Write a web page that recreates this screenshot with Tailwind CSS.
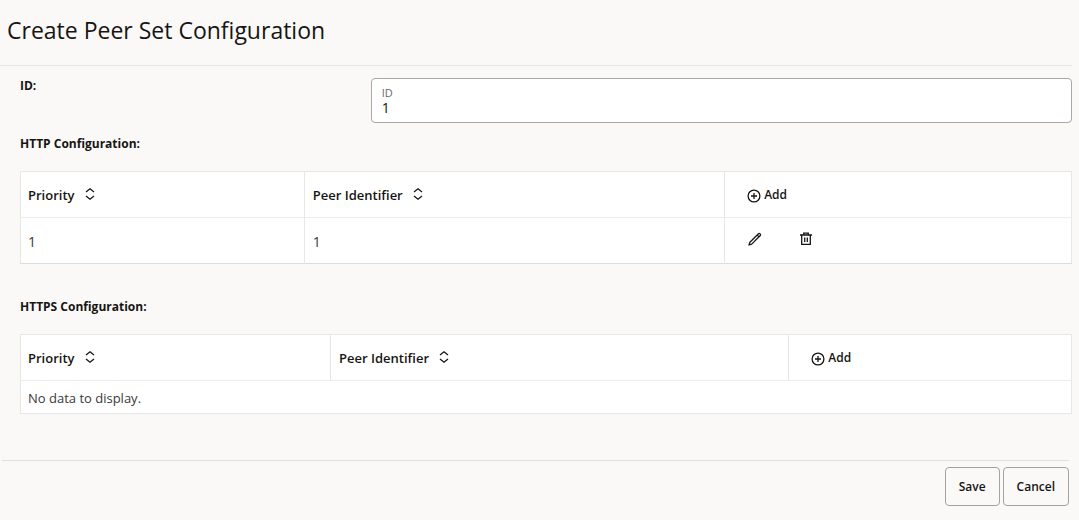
<!DOCTYPE html>
<html lang="en">
<head>
<meta charset="utf-8">
<meta name="viewport" content="width=device-width, initial-scale=1">
<title>Create Peer Set Configuration</title>
<script src="https://cdn.jsdelivr.net/npm/@tailwindcss/browser@4"></script>
</head>
<body class="min-h-screen bg-[#faf9f8] font-['Open_Sans','Noto_Sans',sans-serif] text-[#161513]">
<svg class="hidden" aria-hidden="true">
  <symbol id="sort" viewBox="0 0 10 12"><path d="M1 4 5 .8 9 4M1 8l4 3.200L9 8" fill="none" stroke="currentColor" stroke-width="1.300"/></symbol>
  <symbol id="plus" viewBox="0 0 14 14"><circle cx="7" cy="7" r="5.900" fill="none" stroke="currentColor" stroke-width="1.300"/><path d="M7 4v6M4 7h6" fill="none" stroke="currentColor" stroke-width="1.300"/></symbol>
  <symbol id="pencil" viewBox="0 0 14 14"><path d="M1 13 1.900 10.300 10.500 1.700a1 1 0 0 1 1.400 0l.4.4a1 1 0 0 1 0 1.400L3.700 12.100ZM9.200 3l1.800 1.800" fill="none" stroke="currentColor" stroke-width="1.300" stroke-linejoin="round"/></symbol>
  <symbol id="trash" viewBox="0 0 12 14"><path d="M0 3h12M3.700 3V1.200h4.600V3M1.700 3v9.300h8.600V3M4.700 5.500v4.500M7.300 5.500v4.500" fill="none" stroke="currentColor" stroke-width="1.300"/></symbol>
</svg>
<header class="mr-[7px] border-b border-[#e6e5e4] pt-3 pb-4 pl-[7px]">
  <h1 class="text-[23px] leading-[37px]">Create Peer Set Configuration</h1>
</header>
<main class="pr-[7px] pl-5">
  <div class="flex items-start pt-3">
    <label for="peer-id" class="w-1/3 shrink-0 text-xs leading-4 font-bold">ID:</label>
    <div class="flex h-[45px] grow flex-col rounded border border-[#a9a8a6] bg-white px-[10px] pt-[7px]">
      <label for="peer-id" class="text-[11px] leading-[14px] text-[#6b6967]">ID</label>
      <input id="peer-id" type="text" value="1" class="h-4 w-full bg-transparent text-sm leading-4 outline-none">
    </div>
  </div>

  <h2 class="mt-[13px] text-xs leading-4 font-bold">HTTP Configuration:</h2>
  <table class="mt-[19px] w-full table-fixed border-collapse border border-b-[#dddcda] border-[#e8e7e6] bg-white text-left text-sm" aria-label="HTTP Configuration">
    <colgroup><col class="w-[27%]"><col class="w-[40%]"><col></colgroup>
    <thead>
      <tr class="h-[46px] border-b border-[#ececeb]">
        <th class="border-r border-[#e8e7e6] px-[7px] pt-[2px] text-[13px] font-semibold"><button type="button" class="flex items-center gap-[10px]">Priority <svg class="mb-1 h-3 w-[10px]"><use href="#sort"/></svg></button></th>
        <th class="border-r border-[#e8e7e6] px-2 pt-[2px] text-[13px] font-semibold"><button type="button" class="flex items-center gap-[10px]">Peer Identifier <svg class="mb-1 h-3 w-[10px]"><use href="#sort"/></svg></button></th>
        <th class="pl-[22px] text-xs font-semibold"><button type="button" class="flex items-center gap-[3px]"><svg class="mt-[2px] size-[14px]"><use href="#plus"/></svg>Add</button></th>
      </tr>
    </thead>
    <tbody>
      <tr class="h-[46px] text-[#3a3937]">
        <td class="border-r border-[#e8e7e6] px-[7px] pt-[2px]">1</td>
        <td class="border-r border-[#e8e7e6] px-2 pt-[2px]">1</td>
        <td class="pl-[23px]"><div class="mb-1 flex gap-[38px] text-[#161513]"><button type="button" aria-label="Edit"><svg class="size-[14px]"><use href="#pencil"/></svg></button><button type="button" aria-label="Delete"><svg class="h-[14px] w-3"><use href="#trash"/></svg></button></div></td>
      </tr>
    </tbody>
  </table>

  <h2 class="mt-[35px] text-xs leading-4 font-bold">HTTPS Configuration:</h2>
  <table class="mt-[19px] w-full table-fixed border-collapse border border-[#e8e7e6] bg-white text-left text-sm" aria-label="HTTPS Configuration">
    <colgroup><col class="w-[29.500%]"><col class="w-[43.600%]"><col></colgroup>
    <thead>
      <tr class="h-[46px] border-b border-[#ececeb]">
        <th class="border-r border-[#e8e7e6] px-[7px] pt-[2px] text-[13px] font-semibold"><button type="button" class="flex items-center gap-[10px]">Priority <svg class="mb-1 h-3 w-[10px]"><use href="#sort"/></svg></button></th>
        <th class="border-r border-[#e8e7e6] px-2 pt-[2px] text-[13px] font-semibold"><button type="button" class="flex items-center gap-[10px]">Peer Identifier <svg class="mb-1 h-3 w-[10px]"><use href="#sort"/></svg></button></th>
        <th class="pl-[22px] text-xs font-semibold"><button type="button" class="flex items-center gap-[3px]"><svg class="mt-[2px] size-[14px]"><use href="#plus"/></svg>Add</button></th>
      </tr>
    </thead>
    <tbody>
      <tr class="h-[33px]"><td colspan="3" class="px-[7px] pt-[2px] text-[13px] text-[#3a3937]">No data to display.</td></tr>
    </tbody>
  </table>
</main>
<footer class="mt-[46px] mr-[10px] ml-[2px] flex justify-end gap-[3px] border-t border-[#e0dfde] pt-[6px] text-xs font-semibold">
  <button type="button" class="h-[39px] rounded border border-[#a3a2a0] px-[13px]">Save</button>
  <button type="button" class="h-[39px] rounded border border-[#a3a2a0] px-[13px]">Cancel</button>
</footer>
</body>
</html>
